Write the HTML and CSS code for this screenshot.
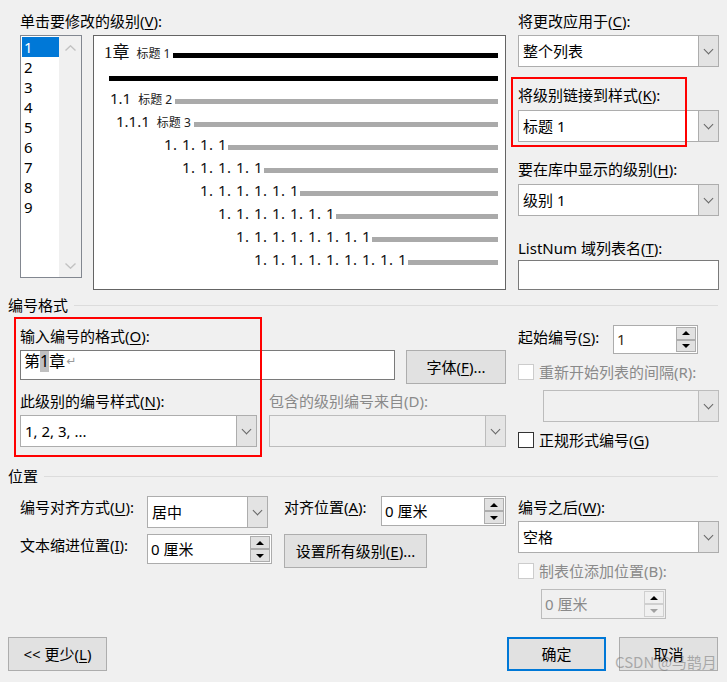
FILE: index.html
```html
<!DOCTYPE html>
<html lang="zh-CN">
<head>
<meta charset="utf-8">
<title>定义新多级列表</title>
<link rel="stylesheet" href="styles.css">
</head>
<body>
<div class="dialog">
  <div class="cols top">
    <div class="top-left">
      <div class="label">单击要修改的级别(<u>V</u>):</div>
      <div class="top-left-body">
        <div class="levels">
          <div class="levels-items">
            <div class="lvl sel">1</div>
            <div class="lvl">2</div>
            <div class="lvl">3</div>
            <div class="lvl">4</div>
            <div class="lvl">5</div>
            <div class="lvl">6</div>
            <div class="lvl">7</div>
            <div class="lvl">8</div>
            <div class="lvl">9</div>
          </div>
          <div class="levels-scroll">
            <svg class="chev" width="11" height="6" viewBox="0 0 11 6"><polyline points="0.5,5.5 5.5,0.8 10.5,5.5"/></svg>
            <svg class="chev" width="11" height="6" viewBox="0 0 11 6"><polyline points="0.5,0.5 5.5,5.2 10.5,0.5"/></svg>
          </div>
        </div>
        <div class="preview">
          <div class="prow r1"><span class="pnum"><span class="ser">1章</span><span class="ptag">标题 1</span></span><span class="bar black"></span></div>
          <div class="prow solo r1b"><span class="bar black"></span></div>
          <div class="prow r2"><span class="pnum">1.1<span class="ptag">标题 2</span></span><span class="bar"></span></div>
          <div class="prow r3"><span class="pnum">1.1.1<span class="ptag">标题 3</span></span><span class="bar"></span></div>
          <div class="prow r4"><span class="pnum"><span class="sp">1. 1. 1. 1</span></span><span class="bar"></span></div>
          <div class="prow r5"><span class="pnum"><span class="sp">1. 1. 1. 1. 1</span></span><span class="bar"></span></div>
          <div class="prow r6"><span class="pnum"><span class="sp">1. 1. 1. 1. 1. 1</span></span><span class="bar"></span></div>
          <div class="prow r7"><span class="pnum"><span class="sp">1. 1. 1. 1. 1. 1. 1</span></span><span class="bar"></span></div>
          <div class="prow r8"><span class="pnum"><span class="sp">1. 1. 1. 1. 1. 1. 1. 1</span></span><span class="bar"></span></div>
          <div class="prow r9"><span class="pnum"><span class="sp">1. 1. 1. 1. 1. 1. 1. 1. 1</span></span><span class="bar"></span></div>
        </div>
      </div>
    </div>
    <div class="top-right">
      <div class="label">将更改应用于(<u>C</u>):</div>
      <div class="combo apply-combo"><span class="val">整个列表</span><span class="drop"></span></div>
      <div class="label link-label">将级别链接到样式(<u>K</u>):</div>
      <div class="combo link-combo"><span class="val">标题 1</span><span class="drop"></span></div>
      <div class="label gallery-label">要在库中显示的级别(<u>H</u>):</div>
      <div class="combo gallery-combo"><span class="val">级别 1</span><span class="drop"></span></div>
      <div class="label listnum-label">ListNum 域列表名(<u>T</u>):</div>
      <div class="textbox listnum-box"></div>
    </div>
  </div>

  <div class="section-head fmt-head">编号格式</div>
  <div class="cols fmt">
    <div class="fmt-left">
      <div class="label fmt-label">输入编号的格式(<u>O</u>):</div>
      <div class="fmt-row">
        <div class="textbox fmt-box"><span>第</span><span class="hl">1</span><span>章</span><span class="ret">↵</span></div>
        <div class="button font-btn">字体(<u>F</u>)...</div>
      </div>
      <div class="fmt-row style-labels">
        <div class="label style-label">此级别的编号样式(<u>N</u>):</div>
        <div class="label dim">包含的级别编号来自(D):</div>
      </div>
      <div class="fmt-row style-row">
        <div class="combo style-combo"><span class="val">1, 2, 3, ...</span><span class="drop"></span></div>
        <div class="combo disabled include-combo"><span class="val"></span><span class="drop"></span></div>
      </div>
    </div>
    <div class="fmt-right">
      <div class="start-row">
        <div class="label">起始编号(<u>S</u>):</div>
        <div class="spin start-spin"><span class="val">1</span><span class="spin-btns"><span class="up"></span><span class="down"></span></span></div>
      </div>
      <div class="check-row disabled restart-row"><span class="cb"></span>重新开始列表的间隔(R):</div>
      <div class="combo disabled restart-combo"><span class="val"></span><span class="drop"></span></div>
      <div class="check-row legal-row"><span class="cb"></span>正规形式编号(<u>G</u>)</div>
    </div>
  </div>

  <div class="section-head pos-head">位置</div>
  <div class="cols pos">
    <div class="pos-left">
      <div class="pos-row row-align">
        <div class="label lab-wide">编号对齐方式(<u>U</u>):</div>
        <div class="combo align-combo"><span class="val">居中</span><span class="drop"></span></div>
        <div class="label lab-at">对齐位置(<u>A</u>):</div>
        <div class="spin pos-spin"><span class="val">0 厘米</span><span class="spin-btns"><span class="up"></span><span class="down"></span></span></div>
      </div>
      <div class="pos-row row-indent">
        <div class="label lab-wide">文本缩进位置(<u>I</u>):</div>
        <div class="spin pos-spin"><span class="val">0 厘米</span><span class="spin-btns"><span class="up"></span><span class="down"></span></span></div>
        <div class="button all-btn">设置所有级别(<u>E</u>)...</div>
      </div>
    </div>
    <div class="pos-right">
      <div class="label after-label">编号之后(<u>W</u>):</div>
      <div class="combo after-combo"><span class="val">空格</span><span class="drop"></span></div>
      <div class="check-row disabled tab-row"><span class="cb"></span>制表位添加位置(B):</div>
      <div class="spin disabled tab-spin"><span class="val">0 厘米</span><span class="spin-btns"><span class="up"></span><span class="down"></span></span></div>
    </div>
  </div>

  <div class="footer">
    <div class="button less-btn">&lt;&lt; 更少(<u>L</u>)</div>
    <div class="button default ok-btn">确定</div>
    <div class="button cancel-btn">取消</div>
  </div>

  <div class="note note-link"></div>
  <div class="note note-fmt"></div>
  <div class="watermark">CSDN @马鹊月</div>
</div>
</body>
</html>
```

FILE: styles.css
```css
* { box-sizing: border-box; }
html, body { margin: 0; padding: 0; background: #f0f0f0; }

.dialog {
  position: relative;
  width: 727px;
  height: 682px;
  padding: 0 8px;
  background: #f0f0f0;
  color: #000;
  font-family: "Noto Sans", "Noto Sans CJK SC", sans-serif;
  font-size: 15px;
  line-height: 20px;
  overflow: hidden;
}

u { text-decoration: underline; text-decoration-thickness: 1px; text-underline-offset: 2px; }

.label { height: 20px; white-space: nowrap; }
.dim { color: #8a8a8a; }

.cols {
  display: grid;
  grid-template-columns: 486px 201px;
  column-gap: 12px;
  padding-left: 12px;
}

/* ---------- top ---------- */
.top { padding-top: 11px; }
.top-left-body { display: flex; gap: 11px; margin-top: 4px; }

.levels {
  width: 62px;
  height: 243px;
  border: 1px solid #828790;
  background: #fff;
  display: flex;
}
.levels-items { width: 38px; padding: 1px 0 0 1px; }
.lvl { height: 20px; padding-left: 2px; line-height: 20px; }
.lvl.sel { background: #0078d7; color: #fff; }
.levels-scroll {
  width: 22px;
  background: #f0f0f0;
  display: flex;
  flex-direction: column;
  justify-content: space-between;
  align-items: center;
  padding: 9px 0 8px;
}
.chev polyline { fill: none; stroke: #c2c2c2; stroke-width: 1.4; }

.preview {
  width: 413px;
  height: 255px;
  border: 1px solid #646464;
  background: #fff;
  padding: 8px 7px 0 0;
}
.prow { display: flex; align-items: baseline; height: 23px; }
.prow.solo { align-items: center; }
.pnum { flex: none; white-space: nowrap; line-height: 16px; font-size: 15px; color: #111; }
.ser { font-family: "Liberation Serif", "Noto Sans CJK SC", serif; font-size: 17px; }
.ptag { font-size: 12px; margin-left: 7px; color: #222; }
.sp { letter-spacing: 0.5px; }
.bar { flex: 1; height: 5px; background: #aaaaaa; }
.bar.black { background: #000; }

.r1 { padding-left: 10px; } .r1 .pnum { width: 69px; }
.r1b { padding-left: 15px; }
.r2 { padding-left: 16px; } .r2 .pnum { width: 65px; }
.r3 { padding-left: 22px; } .r3 .pnum { width: 78px; }
.r4 { padding-left: 70px; } .r4 .pnum { width: 64px; }
.r5 { padding-left: 88px; } .r5 .pnum { width: 82px; }
.r6 { padding-left: 106px; } .r6 .pnum { width: 100px; }
.r7 { padding-left: 124px; } .r7 .pnum { width: 118px; }
.r8 { padding-left: 142px; } .r8 .pnum { width: 136px; }
.r9 { padding-left: 160px; } .r9 .pnum { width: 154px; }

.top-right { display: flex; flex-direction: column; }
.apply-combo { margin-top: 4px; }
.link-label { margin-top: 18px; }
.link-combo { margin-top: 5px; }
.gallery-label { margin-top: 17px; }
.gallery-combo { margin-top: 5px; }
.listnum-label { margin-top: 22px; }
.listnum-box { margin-top: 2px; height: 30px; border-color: #adadad; }

/* ---------- controls ---------- */
.combo {
  display: flex;
  height: 32px;
  border: 1px solid #adadad;
  background: #fff;
}
.combo .val { flex: 1; padding-left: 4px; line-height: 30px; white-space: nowrap; overflow: hidden; }
.combo .drop {
  width: 20px;
  flex: none;
  background: #e3e3e3;
  border-left: 1px solid #adadad;
  display: flex;
  align-items: center;
  justify-content: center;
}
.combo .drop::before {
  content: "";
  width: 6px;
  height: 6px;
  border-right: 1px solid #666;
  border-bottom: 1px solid #666;
  transform: translateY(-2px) rotate(45deg);
}
.combo.disabled { background: #f0f0f0; border-color: #bcbcbc; }
.combo.disabled .drop { background: #e5e5e5; border-left-color: #bcbcbc; }

.textbox { height: 30px; border: 1px solid #7a7a7a; background: #fff; }

.button {
  height: 34px;
  border: 1px solid #adadad;
  background: #e1e1e1;
  display: flex;
  align-items: center;
  justify-content: center;
  white-space: nowrap;
}
.button.default { border: 2px solid #0078d7; }

.spin {
  display: flex;
  height: 30px;
  border: 1px solid #acacac;
  background: #fff;
}
.spin .val { flex: 1; padding-left: 3px; line-height: 28px; white-space: nowrap; }
.spin-btns {
  width: 21px;
  flex: none;
  display: flex;
  flex-direction: column;
  padding: 1px 1px 1px 0;
}
.spin-btns span {
  flex: 1;
  background: #e1e1e1;
  border: 1px solid #adadad;
  display: flex;
  align-items: center;
  justify-content: center;
}
.spin-btns .up::after {
  content: "";
  border-left: 4px solid transparent;
  border-right: 4px solid transparent;
  border-bottom: 4px solid #000;
}
.spin-btns .down::after {
  content: "";
  border-left: 4px solid transparent;
  border-right: 4px solid transparent;
  border-top: 4px solid #000;
}
.spin.disabled { background: #f0f0f0; border-color: #bcbcbc; color: #8a8a8a; }
.spin.disabled .spin-btns span { background: #f0f0f0; border-color: #cfcfcf; }
.spin.disabled .down::after { border-top-color: #a0a0a0; }

.check-row { display: flex; align-items: center; height: 20px; white-space: nowrap; }
.cb { width: 16px; height: 16px; flex: none; border: 1px solid #333; background: #fff; margin-right: 5px; }
.check-row.disabled { color: #8a8a8a; }
.check-row.disabled .cb { border-color: #cccccc; }

/* ---------- section heads ---------- */
.section-head { display: flex; align-items: center; height: 20px; margin-right: 1px; white-space: nowrap; }
.section-head::after { content: ""; flex: 1; height: 1px; background: #dcdcdc; margin-left: 6px; }
.fmt-head { margin-top: 5px; }
.pos-head { margin-top: 16px; }

/* ---------- number format ---------- */
.fmt-label { margin-top: 11px; }
.fmt-row { display: flex; align-items: flex-start; margin-top: 4px; }
.fmt-box {
  width: 375px;
  padding-left: 3px;
  font-size: 16px;
  line-height: 21px;
  display: flex;
  align-items: flex-start;
}
.hl { background: #c0c0c0; }
.ret { color: #9a9a9a; font-size: 12px; margin-left: 1px; font-family: "DejaVu Sans", sans-serif; }
.font-btn { width: 100px; margin-left: 11px; }
.style-labels { margin-top: 7px; }
.style-label { width: 249px; }
.style-combo { width: 237px; }
.include-combo { width: 237px; margin-left: 12px; }

.fmt-right { display: flex; flex-direction: column; }
.start-row { display: flex; align-items: flex-start; margin-top: 10px; }
.start-row .label { width: 95px; margin-top: 2px; }
.start-spin { width: 85px; height: 29px; }
.start-spin .val { line-height: 27px; color: #3a2a10; }
.restart-row { margin-top: 8px; }
.restart-combo { margin: 8px 0 0 25px; }
.legal-row { margin-top: 8px; }

/* ---------- position ---------- */
.pos-row { display: flex; align-items: flex-start; }
.pos-row .label { margin-top: 1px; }
.row-align { margin-top: 10px; }
.row-indent { margin-top: 6px; }
.lab-wide { width: 127px; }
.align-combo { width: 121px; }
.lab-at { width: 97px; margin-left: 16px; }
.pos-spin { width: 125px; }
.all-btn { width: 143px; margin-left: 12px; }

.pos-right { display: flex; flex-direction: column; }
.after-label { margin-top: 11px; }
.after-combo { margin-top: 4px; }
.tab-row { margin-top: 8px; }
.tab-spin { width: 125px; margin: 8px 0 0 23px; }

/* ---------- footer ---------- */
.footer { display: flex; margin-top: 18px; padding-right: 1px; }
.footer .button { width: 99px; }
.ok-btn { margin-left: auto; }
.cancel-btn { margin-left: 13px; }

/* ---------- overlays ---------- */
.note { position: absolute; border: 2px solid #ff0000; pointer-events: none; }
.note-link { left: 511px; top: 77px; width: 176px; height: 70px; }
.note-fmt { left: 14px; top: 317px; width: 248px; height: 140px; }

.watermark {
  position: absolute;
  left: 615px;
  top: 652px;
  font-family: "Noto Sans CJK SC", sans-serif;
  font-size: 15px;
  line-height: 20px;
  color: rgba(110, 110, 110, 0.5);
  white-space: nowrap;
}
```
